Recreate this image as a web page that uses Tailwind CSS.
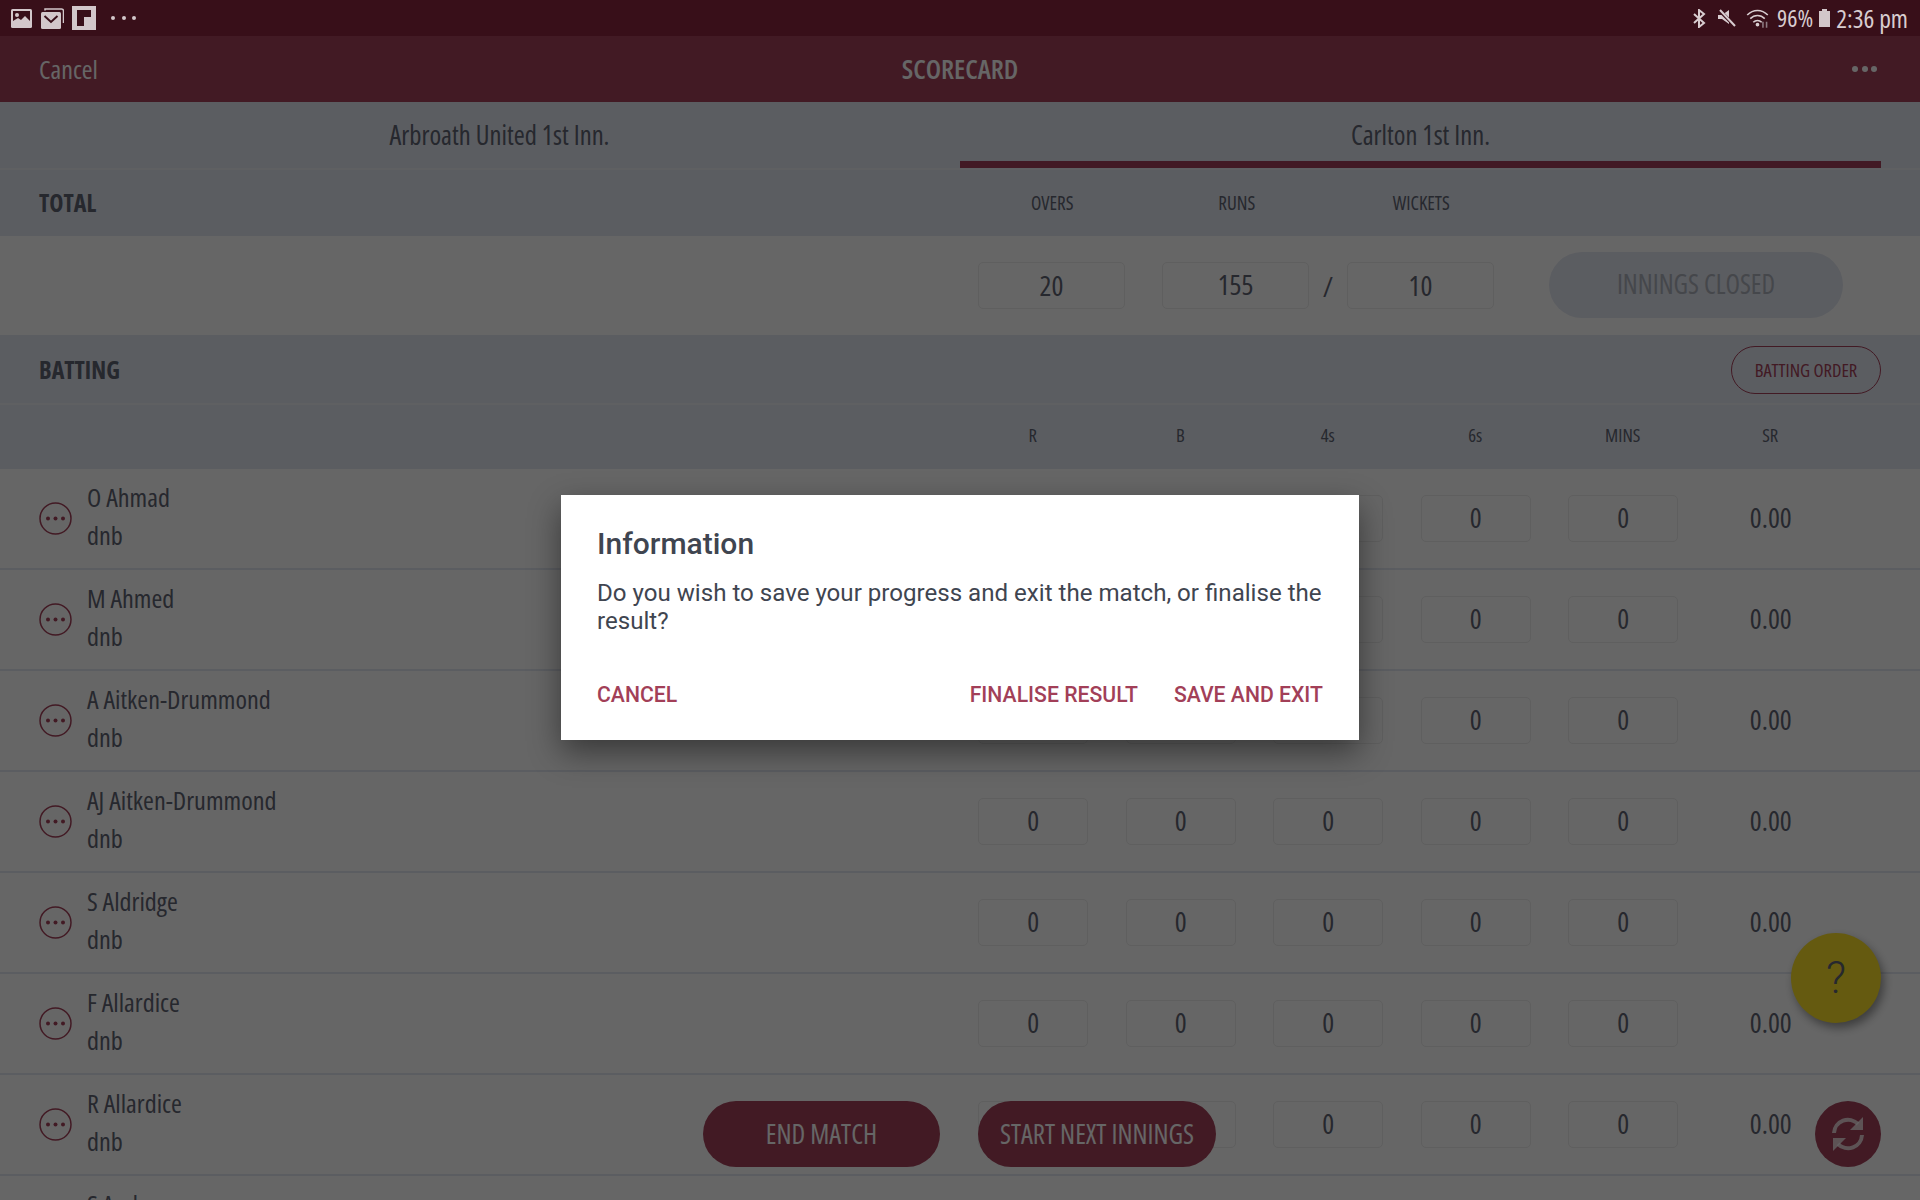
<!doctype html>
<html><head><meta charset="utf-8"><script src="https://cdn.jsdelivr.net/npm/@tailwindcss/browser@4"></script></head>
<body class="m-0 overflow-hidden">
<div class="relative w-[1920px] h-[1200px] overflow-hidden bg-white font-['Open_Sans',sans-serif] [font-stretch:75%] text-[#5f6473]">

<div class="relative z-30 flex h-[36px] items-center bg-[#380f19] pl-[11px] pr-[12px] text-[#d8cdd0]">
 <div class="flex items-center">
  <svg width="21" height="19" viewBox="0 0 21 19" class="mr-[9px]"><rect width="21" height="19" rx="1.5" fill="#d2c7ca"/><rect x="2" y="2" width="17" height="13" fill="#380f19"/><circle cx="6" cy="6" r="2" fill="#d2c7ca"/><path d="M2 15l0-3 5-3 3 2 4-4 5 5 0 3z" fill="#d2c7ca"/></svg>
  <svg width="23" height="21" viewBox="0 0 23 21" class="mr-[8px]"><path d="M4 2.500V1h16a2 2 0 0 1 2.500 2v12" fill="none" stroke="#d2c7ca" stroke-width="1.500"/><rect x="0" y="4" width="20" height="17" rx="1.500" fill="#d2c7ca"/><path d="M3.500 8l6.500 6 6.500-6" fill="none" stroke="#380f19" stroke-width="2"/></svg>
  <svg width="24" height="24" viewBox="0 0 24 24" class="mr-[15px]"><rect width="24" height="24" fill="#d2c7ca"/><path d="M5 4h14v7h-7v9H5z" fill="#380f19"/></svg>
  <div class="flex items-center gap-[6.500px]"><span class="size-[4px] rounded-full bg-[#d2c7ca]"></span><span class="size-[4px] rounded-full bg-[#d2c7ca]"></span><span class="size-[4px] rounded-full bg-[#d2c7ca]"></span></div>
 </div>
 <div class="ml-auto flex items-center">
  <svg width="13" height="19" viewBox="0 0 13 19" class="mr-[12px]"><path d="M1 5l10 9-5 4V1l5 4-10 9" fill="none" stroke="#d8cdd0" stroke-width="2"/></svg>
  <svg width="18" height="18" viewBox="0 0 18 18" class="mr-[10px]"><path d="M0 6h4l7-5v14l-7-5H0z" fill="#d8cdd0"/><path d="M1 1l16 16" stroke="#380f19" stroke-width="3.500"/><path d="M2 1l15 16" stroke="#d8cdd0" stroke-width="2"/></svg>
  <svg width="23" height="20" viewBox="0 0 19 16" class="mr-[8px]"><g fill="none" stroke="#d8cdd0" stroke-width="1.300"><path d="M1 5.500c5-5 12-5 17 0"/><path d="M3.500 8.500c3.500-3.500 8.500-3.500 12 0"/><path d="M6 11.500c2-2 5-2 7 0"/></g><circle cx="9.500" cy="13.500" r="1.500" fill="#d8cdd0"/><path d="M14 11v5M17 16v-5" stroke="#8d7a80" stroke-width="1.300"/></svg>
  <span class="text-[24px] leading-[36px]">96%</span>
  <svg width="11" height="18" viewBox="0 0 11 18" class="ml-[6px] mr-[6px]"><path d="M3 0h5v2h3v16H0V2h3z" fill="#d2c7ca"/></svg>
  <span class="text-[25.500px] leading-[36px]">2:36 pm</span>
 </div>
</div>

<div class="relative flex h-[66px] items-center justify-between bg-[#a5415a] px-[39px] text-[26px] text-white">
 <span>Cancel</span>
 <span class="absolute left-0 right-0 text-center text-[27px] font-semibold">SCORECARD</span>
 <span class="flex gap-[3.500px] pr-[4px]"><i class="size-[6px] rounded-full bg-white"></i><i class="size-[6px] rounded-full bg-white"></i><i class="size-[6px] rounded-full bg-white"></i></span>
</div>

<div class="flex h-[68px] border-b-2 border-[#eef0f5] bg-[#e4e8f2] pr-[39px] text-[26.600px]">
 <div class="flex w-[960px] items-center justify-center pl-[39px] pt-[2px]">Arbroath United 1st Inn.</div>
 <div class="flex flex-1 items-center justify-center border-b-[7px] border-[#a5415a] pt-[9px]">Carlton 1st Inn.</div>
</div>

<div class="flex h-[66px] items-center bg-[#e4e8f2] pl-[39px]">
 <span class="w-[921px] text-[24px] font-bold">TOTAL</span>
 <div class="flex text-[19px]">
  <span class="w-[184.500px] text-center">OVERS</span><span class="w-[184.500px] text-center">RUNS</span><span class="w-[184.500px] text-center">WICKETS</span>
 </div>
</div>

<div class="flex h-[99px] items-center bg-white pl-[978px]">
 <div class="flex h-[47px] w-[147px] items-center justify-center rounded-[5px] border border-[#ededed] pb-[2px] text-[28px]">20</div>
 <div class="ml-[37px] flex h-[47px] w-[147px] items-center justify-center rounded-[5px] border border-[#ededed] pb-[3px] text-[28px]">155</div>
 <div class="flex w-[38px] justify-center text-[28px]">/</div>
 <div class="flex h-[47px] w-[147px] items-center justify-center rounded-[5px] border border-[#ededed] pb-[2px] text-[28px]">10</div>
 <div class="mb-[2px] ml-[55px] flex h-[66px] w-[294px] items-center justify-center rounded-[33px] bg-[#e4e8f2] text-[26.600px] text-[#adb1bc]">INNINGS CLOSED</div>
</div>

<div class="flex h-[70px] items-center justify-between border-b-2 border-[#eef0f5] bg-[#e4e8f2] px-[39px] pt-[2px]">
 <span class="text-[24px] font-bold">BATTING</span>
 <span class="flex h-[48px] w-[150px] items-center justify-center rounded-[24px] border border-[#a5415a] pb-[1px] text-[18.500px] text-[#a5415a]">BATTING ORDER</span>
</div>

<div class="flex h-[64px] items-center bg-[#e4e8f2] pb-[4px] pl-[959px] text-[18.500px]">
 <span class="w-[147.500px] text-center">R</span><span class="w-[147.500px] text-center">B</span><span class="w-[147.500px] text-center">4s</span><span class="w-[147.500px] text-center">6s</span><span class="w-[147.500px] text-center">MINS</span><span class="w-[147.500px] text-center">SR</span>
</div>

<div class="flex h-[101px] items-center border-b-2 border-[#e4e8f2] pl-[39px]">
 <svg width="33" height="33" viewBox="0 0 33 33" class="mr-[15px]"><circle cx="16.500" cy="16.500" r="15.500" fill="none" stroke="#a5415a" stroke-width="1.500"/><circle cx="9" cy="16.500" r="2" fill="#a5415a"/><circle cx="16.500" cy="16.500" r="2" fill="#a5415a"/><circle cx="24" cy="16.500" r="2" fill="#a5415a"/></svg>
 <div class="w-[872.500px] pb-[5px] text-[26.200px] leading-[38px]"><div>O Ahmad</div><div>dnb</div></div>
 <div class="flex text-[28px] [&>span]:pb-[3px]"><span class="mx-[18.750px] flex h-[47px] w-[110px] items-center justify-center rounded-[5px] border border-[#ededed]">0</span><span class="mx-[18.750px] flex h-[47px] w-[110px] items-center justify-center rounded-[5px] border border-[#ededed]">0</span><span class="mx-[18.750px] flex h-[47px] w-[110px] items-center justify-center rounded-[5px] border border-[#ededed]">0</span><span class="mx-[18.750px] flex h-[47px] w-[110px] items-center justify-center rounded-[5px] border border-[#ededed]">0</span><span class="mx-[18.750px] flex h-[47px] w-[110px] items-center justify-center rounded-[5px] border border-[#ededed]">0</span><span class="flex h-[47px] w-[147.500px] items-center justify-center">0.00</span></div>
</div>
<div class="flex h-[101px] items-center border-b-2 border-[#e4e8f2] pl-[39px]">
 <svg width="33" height="33" viewBox="0 0 33 33" class="mr-[15px]"><circle cx="16.500" cy="16.500" r="15.500" fill="none" stroke="#a5415a" stroke-width="1.500"/><circle cx="9" cy="16.500" r="2" fill="#a5415a"/><circle cx="16.500" cy="16.500" r="2" fill="#a5415a"/><circle cx="24" cy="16.500" r="2" fill="#a5415a"/></svg>
 <div class="w-[872.500px] pb-[5px] text-[26.200px] leading-[38px]"><div>M Ahmed</div><div>dnb</div></div>
 <div class="flex text-[28px] [&>span]:pb-[3px]"><span class="mx-[18.750px] flex h-[47px] w-[110px] items-center justify-center rounded-[5px] border border-[#ededed]">0</span><span class="mx-[18.750px] flex h-[47px] w-[110px] items-center justify-center rounded-[5px] border border-[#ededed]">0</span><span class="mx-[18.750px] flex h-[47px] w-[110px] items-center justify-center rounded-[5px] border border-[#ededed]">0</span><span class="mx-[18.750px] flex h-[47px] w-[110px] items-center justify-center rounded-[5px] border border-[#ededed]">0</span><span class="mx-[18.750px] flex h-[47px] w-[110px] items-center justify-center rounded-[5px] border border-[#ededed]">0</span><span class="flex h-[47px] w-[147.500px] items-center justify-center">0.00</span></div>
</div>
<div class="flex h-[101px] items-center border-b-2 border-[#e4e8f2] pl-[39px]">
 <svg width="33" height="33" viewBox="0 0 33 33" class="mr-[15px]"><circle cx="16.500" cy="16.500" r="15.500" fill="none" stroke="#a5415a" stroke-width="1.500"/><circle cx="9" cy="16.500" r="2" fill="#a5415a"/><circle cx="16.500" cy="16.500" r="2" fill="#a5415a"/><circle cx="24" cy="16.500" r="2" fill="#a5415a"/></svg>
 <div class="w-[872.500px] pb-[5px] text-[26.200px] leading-[38px]"><div>A Aitken-Drummond</div><div>dnb</div></div>
 <div class="flex text-[28px] [&>span]:pb-[3px]"><span class="mx-[18.750px] flex h-[47px] w-[110px] items-center justify-center rounded-[5px] border border-[#ededed]">0</span><span class="mx-[18.750px] flex h-[47px] w-[110px] items-center justify-center rounded-[5px] border border-[#ededed]">0</span><span class="mx-[18.750px] flex h-[47px] w-[110px] items-center justify-center rounded-[5px] border border-[#ededed]">0</span><span class="mx-[18.750px] flex h-[47px] w-[110px] items-center justify-center rounded-[5px] border border-[#ededed]">0</span><span class="mx-[18.750px] flex h-[47px] w-[110px] items-center justify-center rounded-[5px] border border-[#ededed]">0</span><span class="flex h-[47px] w-[147.500px] items-center justify-center">0.00</span></div>
</div>
<div class="flex h-[101px] items-center border-b-2 border-[#e4e8f2] pl-[39px]">
 <svg width="33" height="33" viewBox="0 0 33 33" class="mr-[15px]"><circle cx="16.500" cy="16.500" r="15.500" fill="none" stroke="#a5415a" stroke-width="1.500"/><circle cx="9" cy="16.500" r="2" fill="#a5415a"/><circle cx="16.500" cy="16.500" r="2" fill="#a5415a"/><circle cx="24" cy="16.500" r="2" fill="#a5415a"/></svg>
 <div class="w-[872.500px] pb-[5px] text-[26.200px] leading-[38px]"><div>AJ Aitken-Drummond</div><div>dnb</div></div>
 <div class="flex text-[28px] [&>span]:pb-[3px]"><span class="mx-[18.750px] flex h-[47px] w-[110px] items-center justify-center rounded-[5px] border border-[#ededed]">0</span><span class="mx-[18.750px] flex h-[47px] w-[110px] items-center justify-center rounded-[5px] border border-[#ededed]">0</span><span class="mx-[18.750px] flex h-[47px] w-[110px] items-center justify-center rounded-[5px] border border-[#ededed]">0</span><span class="mx-[18.750px] flex h-[47px] w-[110px] items-center justify-center rounded-[5px] border border-[#ededed]">0</span><span class="mx-[18.750px] flex h-[47px] w-[110px] items-center justify-center rounded-[5px] border border-[#ededed]">0</span><span class="flex h-[47px] w-[147.500px] items-center justify-center">0.00</span></div>
</div>
<div class="flex h-[101px] items-center border-b-2 border-[#e4e8f2] pl-[39px]">
 <svg width="33" height="33" viewBox="0 0 33 33" class="mr-[15px]"><circle cx="16.500" cy="16.500" r="15.500" fill="none" stroke="#a5415a" stroke-width="1.500"/><circle cx="9" cy="16.500" r="2" fill="#a5415a"/><circle cx="16.500" cy="16.500" r="2" fill="#a5415a"/><circle cx="24" cy="16.500" r="2" fill="#a5415a"/></svg>
 <div class="w-[872.500px] pb-[5px] text-[26.200px] leading-[38px]"><div>S Aldridge</div><div>dnb</div></div>
 <div class="flex text-[28px] [&>span]:pb-[3px]"><span class="mx-[18.750px] flex h-[47px] w-[110px] items-center justify-center rounded-[5px] border border-[#ededed]">0</span><span class="mx-[18.750px] flex h-[47px] w-[110px] items-center justify-center rounded-[5px] border border-[#ededed]">0</span><span class="mx-[18.750px] flex h-[47px] w-[110px] items-center justify-center rounded-[5px] border border-[#ededed]">0</span><span class="mx-[18.750px] flex h-[47px] w-[110px] items-center justify-center rounded-[5px] border border-[#ededed]">0</span><span class="mx-[18.750px] flex h-[47px] w-[110px] items-center justify-center rounded-[5px] border border-[#ededed]">0</span><span class="flex h-[47px] w-[147.500px] items-center justify-center">0.00</span></div>
</div>
<div class="flex h-[101px] items-center border-b-2 border-[#e4e8f2] pl-[39px]">
 <svg width="33" height="33" viewBox="0 0 33 33" class="mr-[15px]"><circle cx="16.500" cy="16.500" r="15.500" fill="none" stroke="#a5415a" stroke-width="1.500"/><circle cx="9" cy="16.500" r="2" fill="#a5415a"/><circle cx="16.500" cy="16.500" r="2" fill="#a5415a"/><circle cx="24" cy="16.500" r="2" fill="#a5415a"/></svg>
 <div class="w-[872.500px] pb-[5px] text-[26.200px] leading-[38px]"><div>F Allardice</div><div>dnb</div></div>
 <div class="flex text-[28px] [&>span]:pb-[3px]"><span class="mx-[18.750px] flex h-[47px] w-[110px] items-center justify-center rounded-[5px] border border-[#ededed]">0</span><span class="mx-[18.750px] flex h-[47px] w-[110px] items-center justify-center rounded-[5px] border border-[#ededed]">0</span><span class="mx-[18.750px] flex h-[47px] w-[110px] items-center justify-center rounded-[5px] border border-[#ededed]">0</span><span class="mx-[18.750px] flex h-[47px] w-[110px] items-center justify-center rounded-[5px] border border-[#ededed]">0</span><span class="mx-[18.750px] flex h-[47px] w-[110px] items-center justify-center rounded-[5px] border border-[#ededed]">0</span><span class="flex h-[47px] w-[147.500px] items-center justify-center">0.00</span></div>
</div>
<div class="flex h-[101px] items-center border-b-2 border-[#e4e8f2] pl-[39px]">
 <svg width="33" height="33" viewBox="0 0 33 33" class="mr-[15px]"><circle cx="16.500" cy="16.500" r="15.500" fill="none" stroke="#a5415a" stroke-width="1.500"/><circle cx="9" cy="16.500" r="2" fill="#a5415a"/><circle cx="16.500" cy="16.500" r="2" fill="#a5415a"/><circle cx="24" cy="16.500" r="2" fill="#a5415a"/></svg>
 <div class="w-[872.500px] pb-[5px] text-[26.200px] leading-[38px]"><div>R Allardice</div><div>dnb</div></div>
 <div class="flex text-[28px] [&>span]:pb-[3px]"><span class="mx-[18.750px] flex h-[47px] w-[110px] items-center justify-center rounded-[5px] border border-[#ededed]">0</span><span class="mx-[18.750px] flex h-[47px] w-[110px] items-center justify-center rounded-[5px] border border-[#ededed]">0</span><span class="mx-[18.750px] flex h-[47px] w-[110px] items-center justify-center rounded-[5px] border border-[#ededed]">0</span><span class="mx-[18.750px] flex h-[47px] w-[110px] items-center justify-center rounded-[5px] border border-[#ededed]">0</span><span class="mx-[18.750px] flex h-[47px] w-[110px] items-center justify-center rounded-[5px] border border-[#ededed]">0</span><span class="flex h-[47px] w-[147.500px] items-center justify-center">0.00</span></div>
</div>
<div class="h-[38px] pl-[87px] pt-[9px] text-[26.200px] leading-[38px]">S Anderson</div>

<div class="absolute bottom-[33px] left-[703px] flex h-[66px] w-[237px] items-center justify-center rounded-[33px] bg-[#a5415a] text-[26.800px] text-white">END MATCH</div>
<div class="absolute bottom-[33px] left-[978px] flex h-[66px] w-[238px] items-center justify-center rounded-[33px] bg-[#a5415a] text-[26.800px] text-white">START NEXT INNINGS</div>
<div class="absolute left-[1791px] top-[933px] flex size-[90px] items-center justify-center rounded-full bg-[#fde128] font-['Roboto'] text-[44px] font-light [font-stretch:100%] shadow-[3px_5px_10px_rgba(0,0,0,0.4)]">?</div>
<div class="absolute bottom-[33px] left-[1815px] flex size-[66px] items-center justify-center rounded-full bg-[#a5415a]">
 <svg width="34" height="36" viewBox="0 0 34 36"><g fill="none" stroke="#ffffff" stroke-opacity=".75" stroke-width="4"><path d="M3 17A14 14 0 0 1 27 8"/><path d="M31 19A14 14 0 0 1 7 28"/></g><path d="M32 1v13H19z" fill="#ffffff" fill-opacity=".75"/><path d="M2 35V22h13z" fill="#ffffff" fill-opacity=".75"/></svg>
</div>

<div class="absolute inset-x-0 bottom-0 top-[36px] bg-black/60"></div>

<div class="absolute left-[561px] top-[495px] z-40 h-[245px] w-[798px] bg-white px-[36px] pt-[29px] font-['Roboto',sans-serif] [font-stretch:100%] text-[#3f4550] shadow-[0_12px_30px_rgba(0,0,0,0.45)]">
 <div class="text-[30px] leading-[40px] font-medium">Information</div>
 <div class="mt-[15px] text-[24.100px] leading-[28px]">Do you wish to save your progress and exit the match, or finalise the result?</div>
 <div class="mt-[46px] flex text-[21.200px] leading-[28px] font-medium text-[#a23f58]">
  <span>CANCEL</span><span class="ml-auto">FINALISE RESULT</span><span class="ml-[36px]">SAVE AND EXIT</span>
 </div>
</div>
</div>
</body></html>
